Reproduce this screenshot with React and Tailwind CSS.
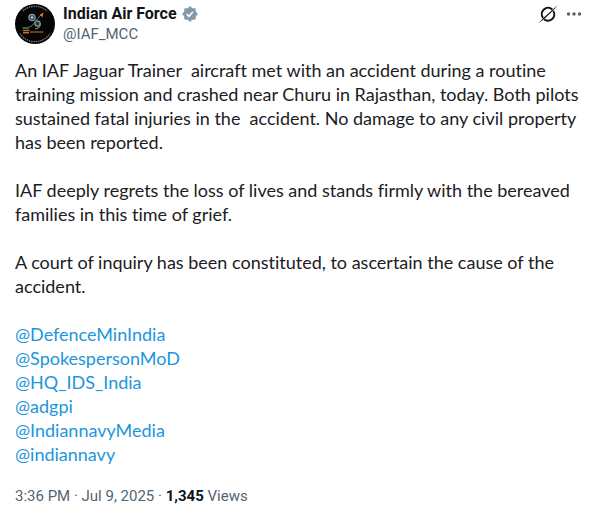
const HANDLES = [
  'DefenceMinIndia',
  'SpokespersonMoD',
  'HQ_IDS_India',
  'adgpi',
  'IndiannavyMedia',
  'indiannavy',
];

const PARAGRAPHS = [
  'An IAF Jaguar Trainer  aircraft met with an accident during a routine training mission and crashed near Churu in Rajasthan, today. Both pilots sustained fatal injuries in the  accident. No damage to any civil property has been reported.',
  'IAF deeply regrets the loss of lives and stands firmly with the bereaved families in this time of grief.',
  'A court of inquiry has been constituted, to ascertain the cause of the accident.',
];

function Avatar() {
  return (
    <svg viewBox="0 0 40 40" className="h-10 w-10 shrink-0" role="img" aria-label="Indian Air Force">
      <circle cx="20" cy="20" r="20" fill="#050505" />
      <path d="M8 7A17.800 17.800 0 0 1 32 7" fill="none" stroke="#b5b5b5" strokeWidth="1.300" strokeDasharray="1.500 .8" opacity=".65" />
      <path d="M5 29.500A17.800 17.800 0 0 0 35 29.500" fill="none" stroke="#b5b5b5" strokeWidth="1.300" strokeDasharray="1.500 .8" opacity=".65" />
      <circle cx="17" cy="13.500" r="3.200" fill="#384b66" stroke="#8796a5" strokeWidth="1.200" />
      <circle cx="17" cy="13.500" r="1.200" fill="#b9c9d4" />
      <path d="M14 23c5-1 7-8 12-12" fill="none" stroke="#84888b" strokeWidth=".9" />
      <path d="M24.500 11l4-2.500-1 5-1.200-1.500z" fill="#e37b25" />
      <circle cx="22.500" cy="19.500" r="2.600" fill="#233b35" stroke="#7aa394" strokeWidth="1.200" />
      <path d="M25.500 19c.5 3-1.500 5.500-5.500 6" fill="none" stroke="#777f83" strokeWidth="1.100" />
      <path d="M7.500 24h6.500" stroke="#2f8b3b" strokeWidth="1.600" />
      <path d="M8 26.500h6.500M8 28.800h6" stroke="#d36b1c" strokeWidth="1.600" />
      <path d="M15.500 28h13" stroke="#a66325" strokeWidth="1.700" strokeDasharray="1.800 .4" />
    </svg>
  );
}

function VerifiedBadge() {
  return (
    <svg viewBox="0 0 22 22" className="h-[18px] w-[18px] shrink-0" role="img" aria-label="Verified account">
      <path
        fill="#829aab"
        d="M12.05 2.056c-.568-.608-1.532-.608-2.1 0l-1.393 1.490c-.284.303-.685.470-1.100.455L5.420 3.932c-.832-.028-1.514.654-1.486 1.486l.069 2.039c.014.415-.152.816-.456 1.100l-1.490 1.392c-.608.568-.608 1.533 0 2.101l1.490 1.393c.304.284.470.684.456 1.100l-.070 2.038c-.027.832.655 1.514 1.487 1.486l2.038-.069c.415-.014.816.152 1.100.456l1.392 1.490c.569.609 1.533.609 2.102 0l1.393-1.490c.283-.304.684-.470 1.099-.456l2.038.069c.832.028 1.515-.654 1.486-1.486L18 14.542c-.015-.415.152-.815.455-1.099l1.490-1.393c.608-.568.608-1.533 0-2.101l-1.490-1.393c-.303-.283-.470-.684-.455-1.100l.068-2.038c.029-.832-.654-1.514-1.486-1.486l-2.038.070c-.415.013-.816-.153-1.100-.456z"
      />
      <path d="M7 11.200l2.700 2.700 4.800-5.400" fill="none" stroke="#fff" strokeWidth="1.900" />
    </svg>
  );
}

function GrokIcon() {
  return (
    <svg viewBox="0 0 20 20" className="h-5 w-5" aria-hidden="true">
      <path d="M14.300 5.400A6.300 6.300 0 0 0 5 13.800" fill="none" stroke="#0f1419" strokeWidth="2" />
      <path d="M15.300 7A6.300 6.300 0 0 1 6.200 15.400" fill="none" stroke="#0f1419" strokeWidth="2" />
      <path d="M.8 19L5 14.200 14.200 6 19.500 1.200 15 6.800 6.200 15z" fill="#0f1419" />
    </svg>
  );
}

function MoreIcon() {
  return (
    <svg viewBox="0 0 16 16" className="h-4 w-4" fill="#536471" aria-hidden="true">
      <circle cx="2.500" cy="8" r="1.700" />
      <circle cx="8" cy="8" r="1.700" />
      <circle cx="13.500" cy="8" r="1.700" />
    </svg>
  );
}

export default function App() {
  return (
    <article className="bg-white px-[15px] pt-1 font-['Roboto','Liberation_Sans',sans-serif] text-[#0f1419]">
      <header className="flex items-start">
        <Avatar />
        <div className="ml-2 min-w-0 flex-1 text-base leading-5">
          <div className="flex items-center gap-1">
            <a href="#profile" className="font-bold">Indian Air Force</a>
            <VerifiedBadge />
          </div>
          <a href="#profile" className="block text-[15px] text-[#536471]">@IAF_MCC</a>
        </div>
        <div className="flex items-center gap-2 pr-[3px]">
          <button type="button" aria-label="Grok actions"><GrokIcon /></button>
          <button type="button" aria-label="More"><MoreIcon /></button>
        </div>
      </header>

      <div className="mt-[14px] space-y-6 font-['Lato','Liberation_Sans',sans-serif] text-lg leading-6 whitespace-pre-wrap text-[#1b2025] [font-variant-ligatures:none]">
        {PARAGRAPHS.map((text) => (
          <p key={text}>{text}</p>
        ))}
        <ul>
          {HANDLES.map((handle) => (
            <li key={handle}>
              <a href={`#${handle}`} className="text-[#1d96dc]">@{handle}</a>
            </li>
          ))}
        </ul>
      </div>

      <footer className="mt-5 text-[15px] leading-5 text-[#536471]">
        <a href="#status">3:36 PM · Jul 9, 2025</a> · <strong className="font-bold text-[#0f1419]">1,345</strong> Views
      </footer>
    </article>
  );
}
